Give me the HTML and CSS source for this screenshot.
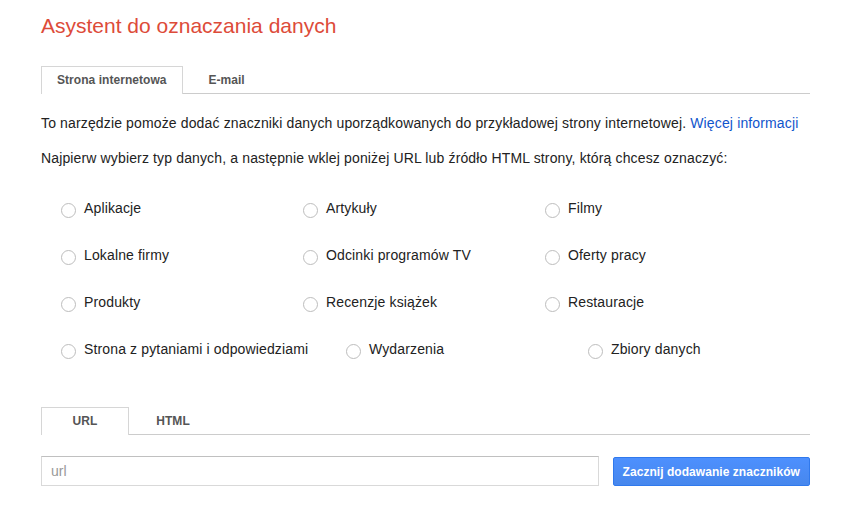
FILE: index.html
```html
<!DOCTYPE html>
<html lang="pl">
<head>
	<meta charset="UTF-8">
	<title>Asystent do oznaczania danych</title>
	<link rel="stylesheet" href="styles.css">
</head>
<body>
	<div class="page">
		<h1 class="title">Asystent do oznaczania danych</h1>

		<div class="tabs tabs-top">
			<div class="tab active">Strona internetowa</div>
			<div class="tab">E-mail</div>
		</div>

		<p class="intro intro-first">To narzędzie pomoże dodać znaczniki danych uporządkowanych do przykładowej strony internetowej. <a href="javascript:;">Więcej informacji</a></p>
		<p class="intro">Najpierw wybierz typ danych, a następnie wklej poniżej URL lub źródło HTML strony, którą chcesz oznaczyć:</p>

		<div class="types">
			<div class="types-row">
				<label class="type"><span class="radio"></span>Aplikacje</label>
				<label class="type"><span class="radio"></span>Artykuły</label>
				<label class="type"><span class="radio"></span>Filmy</label>
			</div>
			<div class="types-row">
				<label class="type"><span class="radio"></span>Lokalne firmy</label>
				<label class="type"><span class="radio"></span>Odcinki programów TV</label>
				<label class="type"><span class="radio"></span>Oferty pracy</label>
			</div>
			<div class="types-row">
				<label class="type"><span class="radio"></span>Produkty</label>
				<label class="type"><span class="radio"></span>Recenzje książek</label>
				<label class="type"><span class="radio"></span>Restauracje</label>
			</div>
			<div class="types-row">
				<label class="type"><span class="radio"></span>Strona z pytaniami i odpowiedziami</label>
				<label class="type"><span class="radio"></span>Wydarzenia</label>
				<label class="type"><span class="radio"></span>Zbiory danych</label>
			</div>
		</div>

		<div class="tabs tabs-source">
			<div class="tab active">URL</div>
			<div class="tab">HTML</div>
		</div>

		<div class="source">
			<input type="text" class="url" placeholder="url">
			<button class="btn-start">Zacznij dodawanie znaczników</button>
		</div>
	</div>
</body>
</html>
```

FILE: styles.css
```css
body, div, h1, p, input, button{ margin: 0; padding: 0}
body{
	background: #fff;
	color: #222;
	font-family: "Liberation Sans", Arial, sans-serif;
	font-size: 14px;
	letter-spacing: 0.14px;
}
a{color: #15c;text-decoration: none;}

.page{width: 769px;margin-left: 41px;padding-top: 14px;}
.title{font-size: 21px;font-weight: normal;line-height: 24px;color: #dd4b39;letter-spacing: 0;}

/* tabs */
.tabs{display: flex;border-bottom: 1px solid #ccc;}
.tabs-top{margin-top: 28px;}
.tabs-source{margin-top: 35px;}
.tab{min-width: 88px;box-sizing: border-box;padding: 0 15px;height: 28px;line-height: 26px;text-align: center;font-size: 12px;font-weight: bold;color: #555;letter-spacing: 0.05px;border: 1px solid transparent;border-bottom: 0;margin-bottom: -1px;cursor: pointer;}
.tab.active{border-color: #d6d6d6;background: #fff;}

.intro{line-height: 16px;margin-top: 19px;}
.intro-first{margin-top: 21px;}

/* data types */
.types{margin-top: 18px;}
.types-row{display: flex;height: 47px;align-items: center;white-space: nowrap;}
.type{display: flex;align-items: center;min-width: 204px;margin: 0 18px 0 20px;line-height: 16px;cursor: pointer;}
.radio{width: 15px;height: 15px;box-sizing: border-box;border: 1px solid #bdbdbd;border-radius: 50%;background: #fff;margin: 5px 8px 0 0;flex: none;}

/* source */
.source{display: flex;align-items: flex-end;margin-top: 21px;}
.url{flex: 1;height: 30px;box-sizing: border-box;border: 1px solid #d9d9d9;border-top-color: #c0c0c0;padding: 0 9px;font-family: "Liberation Sans", Arial, sans-serif;font-size: 14px;color: #222;outline: none;}
.url::placeholder{color: #999;}
.btn-start{flex: none;margin-left: 14px;height: 29px;padding: 0 9px;border: 1px solid #3079ed;border-radius: 2px;background: linear-gradient(#4d90fe, #4787ed);color: #fff;font-family: "Liberation Sans", Arial, sans-serif;font-size: 12px;font-weight: bold;letter-spacing: 0.05px;cursor: pointer;}
```
